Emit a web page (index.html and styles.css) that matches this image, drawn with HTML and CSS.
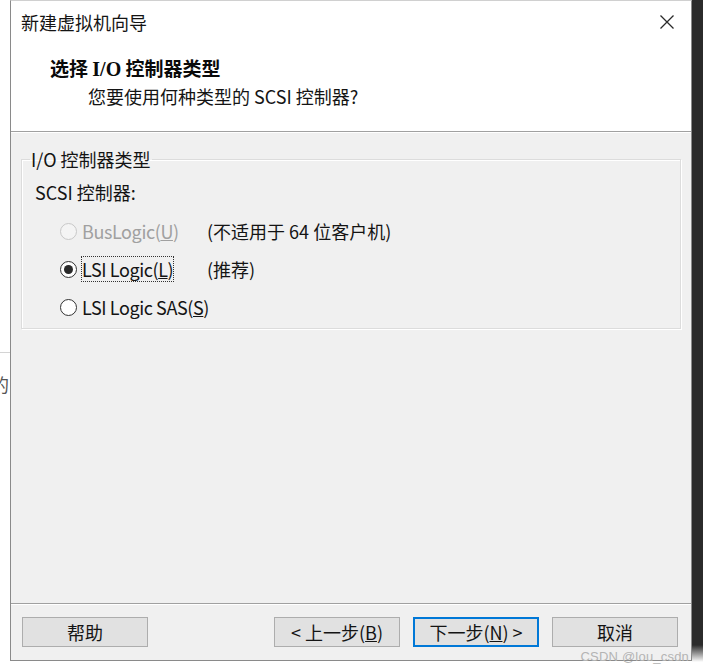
FILE: index.html
```html
<!DOCTYPE html>
<html lang="zh-CN">
<head>
<meta charset="utf-8">
<title>新建虚拟机向导</title>
<link rel="stylesheet" href="styles.css">
</head>
<body>
<div class="screen">
  <div class="behind">
    <div class="behind-line"></div>
    <div class="behind-text">的</div>
  </div>
  <div class="dialog">
    <div class="titlebar">
      <span class="title">新建虚拟机向导</span>
      <svg class="close" width="16" height="16" viewBox="0 0 16 16" aria-hidden="true">
        <path d="M1.5 1.5L14.5 14.5M14.5 1.5L1.5 14.5" stroke="#2a2a2a" stroke-width="1.3" fill="none"/>
      </svg>
    </div>
    <div class="header">
      <div class="h-title">选择 <span class="serif">I/O</span> 控制器类型</div>
      <div class="h-sub">您要使用何种类型的 SCSI 控制器?</div>
    </div>
    <div class="body">
      <fieldset class="group">
        <legend>I/O 控制器类型</legend>
        <div class="scsi-label">SCSI 控制器:</div>
        <div class="options">
          <div class="opt disabled">
            <span class="radio"></span>
            <span class="opt-label"><span class="txt">BusLogic(<u>U</u>)</span></span>
            <span class="note">(不适用于 64 位客户机)</span>
          </div>
          <div class="opt">
            <span class="radio checked"></span>
            <span class="opt-label"><span class="txt focus">LSI Logic(<u>L</u>)</span></span>
            <span class="note">(推荐)</span>
          </div>
          <div class="opt">
            <span class="radio"></span>
            <span class="opt-label wide"><span class="txt">LSI Logic SAS(<u>S</u>)</span></span>
          </div>
        </div>
      </fieldset>
    </div>
    <div class="footer">
      <button class="btn">帮助</button>
      <div class="nav">
        <button class="btn">&lt; 上一步(<u>B</u>)</button>
        <button class="btn default">下一步(<u>N</u>) &gt;</button>
        <button class="btn">取消</button>
      </div>
    </div>
    <div class="watermark">CSDN @lou_csdn</div>
  </div>
  <div class="shadow"></div>
</div>
</body>
</html>
```
FILE: styles.css
```css
* { box-sizing: border-box; }
html, body {
  margin: 0;
  padding: 0;
  background: #ffffff;
}
body {
  font-family: "Noto Sans CJK SC", "Noto Sans", sans-serif;
  font-size: 18px;
  color: #141414;
  width: 703px;
  height: 671px;
  overflow: hidden;
}
.screen {
  display: flex;
  width: 703px;
  height: 671px;
}
.behind {
  width: 10px;
  flex: none;
  overflow: hidden;
  background: #fff;
}
.behind-line {
  margin-top: 352px;
  height: 1px;
  background: #d4d4d4;
}
.behind-text {
  margin-top: 20px;
  margin-left: -9px;
  font-size: 18px;
  line-height: 22px;
  color: #555;
}
.dialog {
  position: relative;
  width: 682px;
  height: 661px;
  flex: none;
  display: flex;
  flex-direction: column;
  border: 1px solid #8a8a8a;
  border-top-color: #d0d0d0;
  background: #f0f0f0;
}
.titlebar {
  height: 44px;
  flex: none;
  background: #fff;
  display: flex;
  align-items: center;
  justify-content: space-between;
  padding: 0 16px 0 10px;
}
.title {
  font-size: 18px;
  line-height: 24px;
  margin-top: -2px;
}
.close {
  display: block;
  margin-top: -3px;
}
.header {
  height: 87px;
  flex: none;
  background: #fff;
  border-bottom: 1px solid #a0a0a0;
  padding: 11px 0 0 39px;
}
.h-title {
  font-weight: bold;
  font-size: 19px;
  line-height: 24px;
  color: #0a0a0a;
}
.serif {
  font-family: "Liberation Serif", "Times New Roman", serif;
  font-size: 20px;
}
.h-sub {
  margin-top: 3px;
  padding-left: 38px;
  line-height: 24px;
}
.body {
  flex: 1;
  border-top: 1px solid #ffffff;
  padding: 16px 10px 0 10px;
}
.group {
  margin: 0;
  padding: 11px 10px 2px 13px;
  border: 1px solid #dcdcdc;
  box-shadow: inset 1px 1px 0 #fff, 1px 1px 0 #fff;
}
.group legend {
  padding: 0 1px;
  margin-left: -5px;
  line-height: 20px;
  font-size: 18px;
}
.scsi-label {
  line-height: 24px;
}
.options {
  margin-top: 8px;
  margin-left: 25px;
}
.opt {
  height: 38px;
  display: flex;
  align-items: center;
}
.radio {
  width: 17px;
  height: 17px;
  flex: none;
  border-radius: 50%;
  border: 1px solid #333;
  background: #fff;
  margin-right: 4px;
  position: relative;
}
.radio.checked::after {
  content: "";
  position: absolute;
  left: 3px;
  top: 3px;
  width: 9px;
  height: 9px;
  border-radius: 50%;
  background: #2a2a2a;
}
.opt.disabled .radio {
  border-color: #c8c8c8;
  background: #f4f4f4;
}
.opt.disabled .opt-label {
  color: #a0a0a0;
}
.opt-label {
  width: 126px;
  flex: none;
  line-height: 24px;
}
.opt-label.wide {
  width: auto;
}
.txt {
  display: inline-block;
  padding: 1px 1px;
  line-height: 24px;
  letter-spacing: -0.4px;
}
.txt.focus {
  outline: 1px dotted #333;
  outline-offset: -1px;
}
.note {
  line-height: 24px;
}
.footer {
  height: 57px;
  flex: none;
  border-top: 1px solid #a0a0a0;
  box-shadow: inset 0 1px 0 #fff;
  display: flex;
  justify-content: space-between;
  padding: 13px 13px 0 11px;
}
.nav {
  display: flex;
  gap: 13px;
}
.btn {
  width: 126px;
  height: 30px;
  margin: 0;
  padding: 0;
  background: #e1e1e1;
  border: 1px solid #adadad;
  font-family: "Noto Sans CJK SC", "Noto Sans", sans-serif;
  font-size: 18px;
  line-height: 26px;
  color: #141414;
}
.btn.default {
  border: 2px solid #0078d7;
}
.watermark {
  position: absolute;
  right: 2px;
  bottom: -4px;
  font-family: "Liberation Sans", Arial, sans-serif;
  font-size: 13px;
  line-height: 14px;
  color: #b4b4b4;
  letter-spacing: 0.2px;
}
.shadow {
  flex: 1;
  height: 671px;
  background: linear-gradient(to bottom, #2b2b2b 0, #2b2b2b 645px, #ffffff 662px);
}
```
